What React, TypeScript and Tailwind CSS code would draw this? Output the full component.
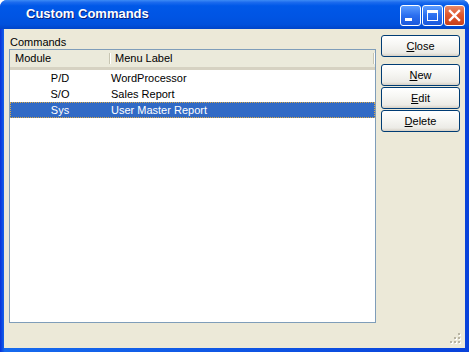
import React from "react";

const font = { fontFamily: '"Liberation Sans", Arial, sans-serif' };

function XPButton({ label, top }: { label: string; top?: string }) {
  return (
    <button
      className={`w-[79px] h-[22px] rounded-[3px] border border-[#003C74] bg-[linear-gradient(180deg,#FFFFFF_0%,#F7F7F4_40%,#ECEBE6_85%,#D6D0C5_100%)] text-[11px] text-black flex items-center justify-center ${top ?? ""}`}
      style={font}
    >
      <span>
        <span className="underline">{label[0]}</span>
        {label.slice(1)}
      </span>
    </button>
  );
}

function Grip() {
  const dots: [number, number][] = [
    [8, 0],
    [4, 4],
    [8, 4],
    [0, 8],
    [4, 8],
    [8, 8],
  ];
  return (
    <svg width="11" height="11" viewBox="0 0 11 11" className="absolute right-[4px] bottom-[4px]">
      {dots.map(([x, y], i) => (
        <g key={i}>
          <rect x={x + 1} y={y + 1} width="2" height="2" fill="#FFFFFF" />
          <rect x={x} y={y} width="2" height="2" fill="#B8B4A2" />
        </g>
      ))}
    </svg>
  );
}

export default function App() {
  const rows = [
    { m: "P/D", l: "WordProcessor" },
    { m: "S/O", l: "Sales Report" },
    { m: "Sys", l: "User Master Report", sel: true },
  ];
  return (
    <div
      className="w-[469px] h-[352px] rounded-t-[7px] overflow-hidden flex flex-col bg-[linear-gradient(90deg,#0831D9_0%,#166AEE_1%,#0842DA_100%)]"
      style={font}
    >
      {/* Title bar */}
      <div className="h-[29px] shrink-0 flex items-center bg-[linear-gradient(180deg,#3D8BF5_0%,#1C6BEE_8%,#0058E8_20%,#0054E3_60%,#0050DC_85%,#0044C8_100%)] relative">
        <span className="absolute left-[26px] top-[6px] text-white font-bold text-[13px] leading-[16px] [text-shadow:1px_1px_0_#0A1F7A]">
          Custom Commands
        </span>
        <div className="absolute left-[400px] top-[5px] flex gap-[1px]">
          <div className="w-[21px] h-[21px] rounded-[3px] border border-white bg-[linear-gradient(180deg,#5C9DFF_0%,#2B6FF0_50%,#1A58DC_100%)] relative">
            <div className="absolute left-[4px] top-[12px] w-[7px] h-[3px] bg-white" />
          </div>
          <div className="w-[21px] h-[21px] rounded-[3px] border border-white bg-[linear-gradient(180deg,#5C9DFF_0%,#2B6FF0_50%,#1A58DC_100%)] relative">
            <div className="absolute left-[4px] top-[4px] w-[11px] h-[11px] border border-white border-t-[3px]" />
          </div>
          <div className="w-[21px] h-[21px] rounded-[3px] border border-white bg-[linear-gradient(180deg,#E88A6A_0%,#E0592F_45%,#C9401A_100%)] flex items-center justify-center">
            <svg width="13" height="13" viewBox="0 0 13 13">
              <path d="M2 2 L11 11 M11 2 L2 11" stroke="white" strokeWidth="2.4" strokeLinecap="square" />
            </svg>
          </div>
        </div>
      </div>

      {/* Body */}
      <div className="flex-1 mx-[4px] mb-[4px] bg-[#ECE9D8] relative flex pl-[5px] pr-[4px]">
        <div className="w-[367px] flex flex-col">
          <div className="h-[20px] pt-[8px] pl-[1px] text-[11px] leading-[11px] text-black">Commands</div>
          <div className="h-[274px] border border-[#7F9DB9] bg-white flex flex-col">
            <div className="h-[20px] shrink-0 flex bg-[#EBEADB] border-b-[3px] border-[#D6D2C2] text-[11px] text-black relative">
              <div className="w-[99px] pl-[5px] flex items-center">Module</div>
              <div className="w-[2px] my-[3px] border-l border-[#C7C5B2] bg-white" />
              <div className="w-[262px] pl-[4px] flex items-center">Menu Label</div>
              <div className="w-[2px] my-[3px] border-l border-[#C7C5B2] bg-white" />
            </div>
            {rows.map((r) => (
              <div
                key={r.m}
                className={`h-[16px] flex items-center text-[11px] ${
                  r.sel ? "bg-[#316AC5] text-white outline-1 outline-dotted outline-[#D8A848] -outline-offset-1" : "text-black"
                }`}
              >
                <div className="w-[100px] text-center">{r.m}</div>
                <div className="pl-[1px]">{r.l}</div>
              </div>
            ))}
          </div>
        </div>
        <div className="ml-[5px] flex flex-col pt-[6px]">
          <XPButton label="Close" />
          <XPButton label="New" top="mt-[7px]" />
          <XPButton label="Edit" top="mt-[1px]" />
          <XPButton label="Delete" top="mt-[1px]" />
        </div>
        <Grip />
      </div>
    </div>
  );
}
